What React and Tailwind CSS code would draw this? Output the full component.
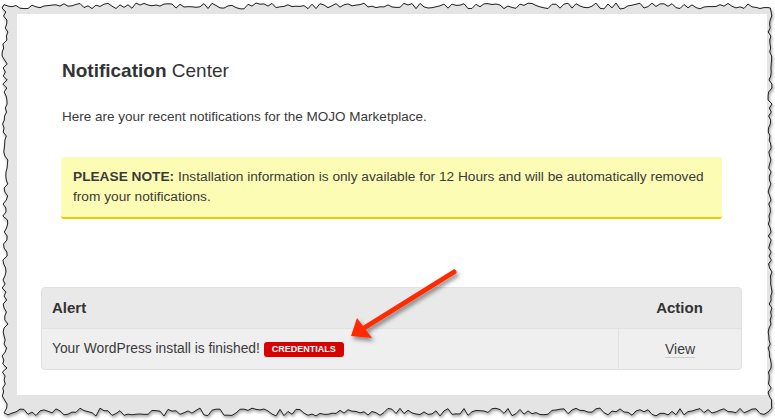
import React from 'react'

// torn paper frame, deterministic jitter so it looks the same each render
const jitter = (i, seed) => {
  const v = Math.sin(i * 12.9898 + seed * 78.233) * 43758.5453
  return v - Math.floor(v)
}

const buildTornPath = () => {
  const pts = []
  for (let x = 4; x <= 770; x += 4) pts.push([x, 6 + (jitter(x, 1) - 0.5) * 6])
  for (let y = 8; y <= 410; y += 4) pts.push([770 + (jitter(y, 2) - 0.5) * 4, y])
  for (let x = 768; x >= 4; x -= 4) pts.push([x, 412 + (jitter(x, 3) - 0.5) * 8])
  for (let y = 408; y >= 8; y -= 4) pts.push([5 + (jitter(y, 4) - 0.5) * 6, y])
  return 'M' + pts.map(([x, y]) => `${x.toFixed(1)} ${y.toFixed(1)}`).join(' L') + ' Z'
}

const tornPath = buildTornPath()

const TornFrame = () => (
  <svg className="absolute inset-0" width="775" height="420" viewBox="0 0 775 420">
    <defs>
      <filter id="paperShadow" x="-5%" y="-5%" width="110%" height="110%">
        <feDropShadow dx="1" dy="2" stdDeviation="1.5" floodColor="#000" floodOpacity="0.35" />
      </filter>
    </defs>
    <path d={tornPath} fill="#e4e4e4" stroke="#1f1f1f" strokeWidth="1" filter="url(#paperShadow)" />
  </svg>
)

const Arrow = () => (
  <svg className="absolute left-0 top-0 pointer-events-none" width="775" height="420" viewBox="0 0 775 420">
    <defs>
      <filter id="arrowShadow" x="-20%" y="-20%" width="140%" height="140%">
        <feDropShadow dx="2" dy="3" stdDeviation="2" floodColor="#000" floodOpacity="0.45" />
      </filter>
    </defs>
    <g filter="url(#arrowShadow)">
      <line x1="454" y1="272" x2="364" y2="328" stroke="#ff2a00" strokeWidth="5" strokeLinecap="round" />
      <polygon points="351,336 357,318 372,338" fill="#ff2a00" />
    </g>
  </svg>
)

export default function App() {
  return (
    <div
      className="relative w-[775px] h-[420px] overflow-hidden bg-white text-[#3a3a3a]"
      style={{ fontFamily: '"Liberation Sans", Arial, sans-serif' }}
    >
      <TornFrame />

      <div className="relative ml-[17px] mt-[14px] w-[750px] h-[381px] bg-white">
        <div className="pl-[45px] pr-[44px] pt-[45px]">
          <h1 className="text-[19px] leading-[24px] text-[#333]">
            <span className="font-bold">Notification</span> Center
          </h1>
          <p className="mt-[25px] text-[13.5px] leading-[18px]">
            Here are your recent notifications for the MOJO Marketplace.
          </p>
          <div className="mt-[31px] ml-[-1px] w-[661px] rounded-[3px] border-b-2 border-[#f7c600] bg-[#fdfcb5] px-[12px] py-[10px] text-[13.7px] leading-[20px]">
            <span className="font-bold">PLEASE NOTE:</span> Installation information is only available for 12 Hours and will be automatically removed from your notifications.
          </div>
        </div>

        <div className="mt-[68px] ml-[24px] w-[701px] overflow-hidden rounded-[4px] border border-[#e0e0e0] bg-[#efefef]">
          <div className="flex h-[41px] items-center bg-[#e9e9e9] border-b border-[#e2e2e2]">
            <div className="flex-1 pl-[10px] text-[15px] font-bold text-[#333]">Alert</div>
            <div className="w-[123px] text-center text-[15px] font-bold text-[#333]">Action</div>
          </div>
          <div className="flex h-[40px] items-center">
            <div className="flex flex-1 items-center gap-[4px] pl-[10px] text-[13.8px]">
              <span>Your WordPress install is finished!</span>
              <span className="rounded-[3px] bg-[#d90000] px-[8px] py-[1px] text-[9px] font-bold leading-[13px] text-white">
                CREDENTIALS
              </span>
            </div>
            <div className="flex h-full w-[123px] items-center justify-center border-l border-[#e2e2e2] text-[14px]">
              <span className="border-b border-[#cfcfcf] leading-[16px]">View</span>
            </div>
          </div>
        </div>
      </div>

      <Arrow />
    </div>
  )
}
